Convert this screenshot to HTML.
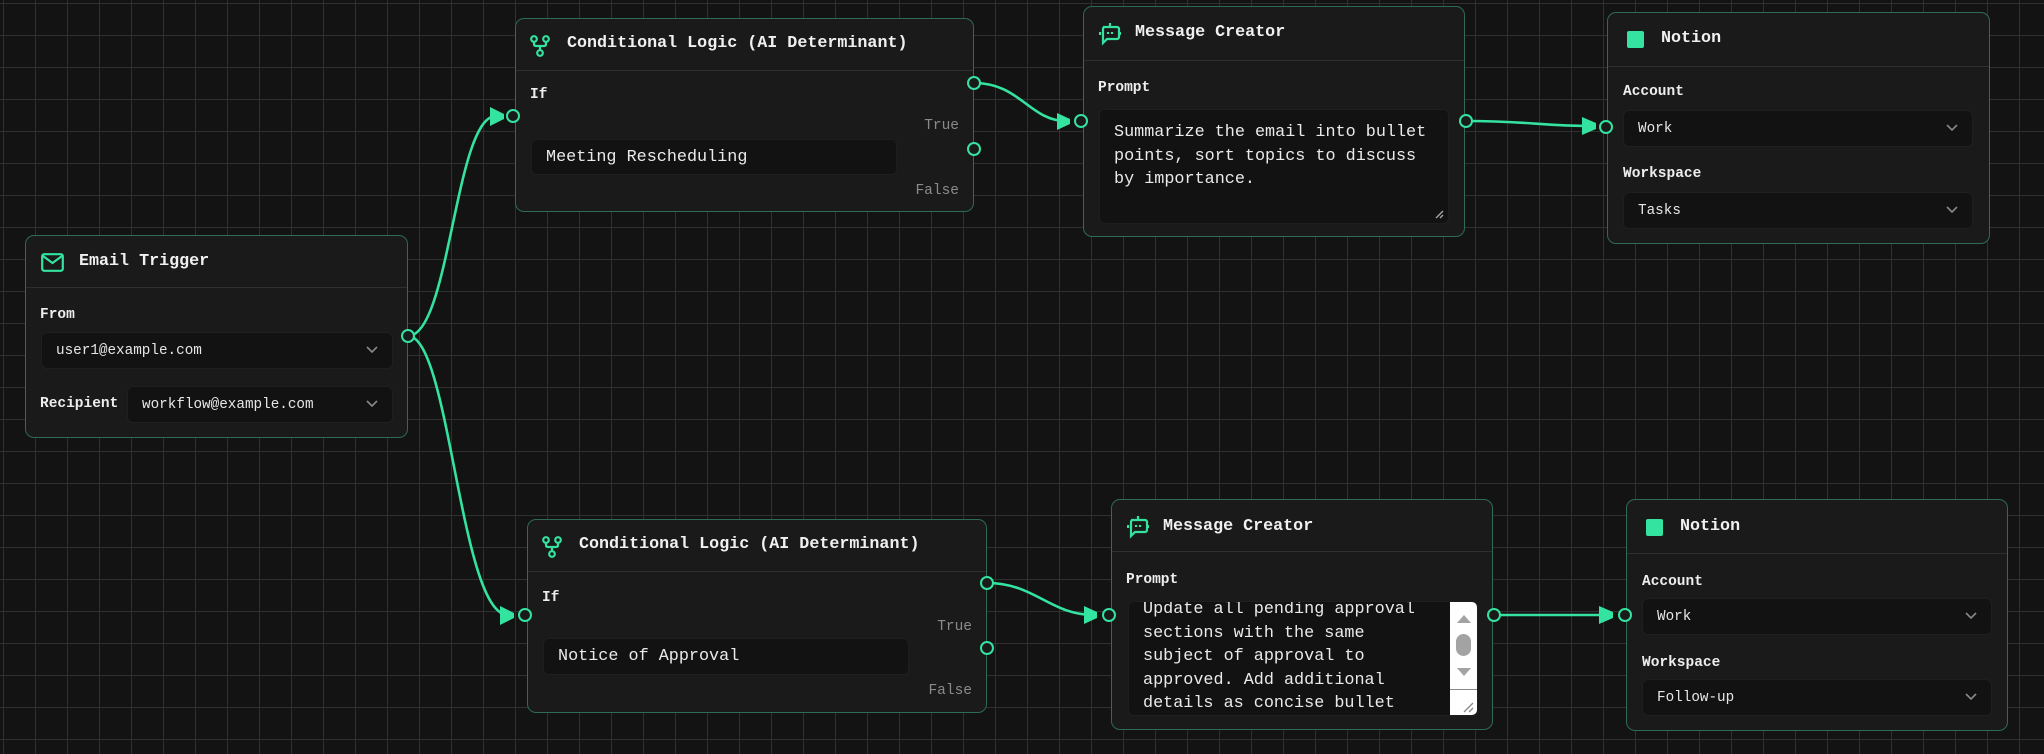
<!DOCTYPE html>
<html><head><meta charset="utf-8"><style>
*{box-sizing:border-box;margin:0;padding:0}
body{width:2044px;height:754px;overflow:hidden;background:#131313;font-family:"Liberation Mono",monospace;color:#e8e8e8;position:relative;
background-image:linear-gradient(#303030 1px,transparent 1px),linear-gradient(90deg,#303030 1px,transparent 1px);background-size:32px 32px;background-position:3px 3px}
.n{position:absolute;background:#1a1a1a;border:1.5px solid #2d6b52;border-radius:9px}
.hd{position:absolute;left:0;right:0;top:0;border-bottom:1.5px solid #2f2f2f}
.t{position:absolute;font-weight:bold;font-size:16.7px;color:#f0f0f0;white-space:nowrap}
.ic{position:absolute}
.lb{position:absolute;font-weight:bold;font-size:14.5px;color:#eee;white-space:nowrap}
.sel{position:absolute;background:#121212;border:1px solid #1f1f1f;border-radius:6px;font-size:14.3px;color:#e6e6e6;padding-left:14px;display:flex;align-items:center}
.sel svg{position:absolute;right:14px;top:50%;margin-top:-5px}
.inp{position:absolute;background:#121212;border:1px solid #1e1e1e;border-radius:6px;font-size:16.8px;color:#eaeaea;padding-left:14px;display:flex;align-items:center}
.ta{position:absolute;background:#121212;border:1px solid #1e1e1e;border-radius:6px;font-size:16.8px;line-height:23.5px;color:#eaeaea;overflow:hidden}
.gr{position:absolute;font-size:14.5px;color:#8a8a8a;text-align:right}
.h{position:absolute;width:14px;height:14px;border:2px solid #34e3a0;border-radius:50%;background:#1a1a1a;margin:-7px 0 0 -7px}
</style></head><body>
<svg width="2044" height="754" style="position:absolute;left:0;top:0" fill="none" stroke="#34e3a0" stroke-width="2.6">
<path d="M408 336 C450 336 455 116 496 116"/>
<path d="M408 336 C450 336 460 615 508 615"/>
<path d="M974 83 C1020 83 1030 121 1066 121"/>
<path d="M1466 121 C1530 121 1540 126 1592 126"/>
<path d="M987 583 C1035 583 1050 615 1094 615"/>
<path d="M1494 615 L1610 615"/>
<g fill="#34e3a0" stroke="none">
<polygon points="490,107 504,114 504,119 490,126"/>
<polygon points="500,606 514,613 514,618 500,625"/>
<polygon points="1057,113 1070,119 1070,124 1057,130"/>
<polygon points="1582,117 1596,123 1596,129 1582,135"/>
<polygon points="1084,606 1097,612 1097,618 1084,624"/>
<polygon points="1599,606 1613,612 1613,618 1599,624"/>
</g></svg>

<!-- Email Trigger -->
<div class="n" style="left:25px;top:235px;width:383px;height:203px">
<div class="hd" style="height:52px"></div>
<svg class="ic" style="left:15px;top:17px" width="23" height="19" viewBox="0 0 23 19" fill="none" stroke="#34e3a0" stroke-width="2.2"><rect x="1.2" y="1.2" width="20.6" height="16.6" rx="2"/><path d="M2 3l9.5 7 9.5-7"/></svg>
<div class="t" style="left:53px;top:16px">Email Trigger</div>
<div class="lb" style="left:14px;top:71px">From</div>
<div class="sel" style="left:15px;top:96px;width:352px;height:37px">user1@example.com<svg width="12" height="8" viewBox="0 0 12 8" fill="none" stroke="#888" stroke-width="1.6"><path d="M1 1l5 5 5-5"/></svg></div>
<div class="lb" style="left:14px;top:160px">Recipient</div>
<div class="sel" style="left:101px;top:150px;width:266px;height:37px">workflow@example.com<svg width="12" height="8" viewBox="0 0 12 8" fill="none" stroke="#888" stroke-width="1.6"><path d="M1 1l5 5 5-5"/></svg></div>
</div>

<!-- Cond 1 -->
<div class="n" style="left:515px;top:18px;width:459px;height:194px">
<div class="hd" style="height:52px"></div>
<svg class="ic" style="left:14px;top:16px" width="20" height="22" viewBox="0 0 20 22" fill="none" stroke="#34e3a0" stroke-width="2.2"><circle cx="4" cy="4" r="2.8"/><circle cx="16" cy="4" r="2.8"/><circle cx="10" cy="18" r="2.8"/><path d="M4 7v2q0 2 2 2h8q2 0 2-2V7M10 11v4"/></svg>
<div class="t" style="left:51px;top:15px">Conditional Logic (AI Determinant)</div>
<div class="lb" style="left:14px;top:68px">If</div>
<div class="gr" style="right:14px;top:99px">True</div>
<div class="inp" style="left:15px;top:120px;width:366px;height:36px">Meeting Rescheduling</div>
<div class="gr" style="right:14px;top:164px">False</div>
</div>

<!-- Cond 2 -->
<div class="n" style="left:527px;top:519px;width:460px;height:194px">
<div class="hd" style="height:52px"></div>
<svg class="ic" style="left:14px;top:16px" width="20" height="22" viewBox="0 0 20 22" fill="none" stroke="#34e3a0" stroke-width="2.2"><circle cx="4" cy="4" r="2.8"/><circle cx="16" cy="4" r="2.8"/><circle cx="10" cy="18" r="2.8"/><path d="M4 7v2q0 2 2 2h8q2 0 2-2V7M10 11v4"/></svg>
<div class="t" style="left:51px;top:15px">Conditional Logic (AI Determinant)</div>
<div class="lb" style="left:14px;top:70px">If</div>
<div class="gr" style="right:14px;top:99px">True</div>
<div class="inp" style="left:15px;top:118px;width:366px;height:37px">Notice of Approval</div>
<div class="gr" style="right:14px;top:163px">False</div>
</div>

<!-- MC1 -->
<div class="n" style="left:1083px;top:6px;width:382px;height:231px">
<div class="hd" style="height:54px"></div>
<svg class="ic" style="left:15px;top:15px" width="22" height="24" viewBox="0 0 22 24" fill="none" stroke="#34e3a0" stroke-width="2.2"><path d="M11 1v4M4 5h14a2 2 0 0 1 2 2v8a2 2 0 0 1-2 2H8l-4 4V7a2 2 0 0 1 2-2z"/><path d="M1 10v3M21 10v3M9 10v2M13 10v2"/></svg>
<div class="t" style="left:51px;top:16px">Message Creator</div>
<div class="lb" style="left:14px;top:73px">Prompt</div>
<div class="ta" style="left:15px;top:102px;width:350px;height:115px;padding:11px 0 0 14px">Summarize the email into bullet<br>points, sort topics to discuss<br>by importance.
<svg style="position:absolute;right:4px;bottom:4px" width="10" height="10" fill="none" stroke="#aaa" stroke-width="1.3"><path d="M9 2L2 9M9 6L6 9"/></svg></div>
</div>

<!-- MC2 -->
<div class="n" style="left:1111px;top:499px;width:382px;height:231px">
<div class="hd" style="height:52px"></div>
<svg class="ic" style="left:15px;top:15px" width="22" height="24" viewBox="0 0 22 24" fill="none" stroke="#34e3a0" stroke-width="2.2"><path d="M11 1v4M4 5h14a2 2 0 0 1 2 2v8a2 2 0 0 1-2 2H8l-4 4V7a2 2 0 0 1 2-2z"/><path d="M1 10v3M21 10v3M9 10v2M13 10v2"/></svg>
<div class="t" style="left:51px;top:17px">Message Creator</div>
<div class="lb" style="left:14px;top:72px">Prompt</div>
<div class="ta" style="left:16px;top:101px;width:350px;height:115px">
<div style="position:absolute;left:14px;top:-4px;width:290px">Update all pending approval sections with the same subject of approval to approved. Add additional details as concise bullet</div>
<div style="position:absolute;right:0;top:0;width:27px;height:114px;background:#fff">
<svg style="position:absolute;left:7px;top:12px" width="14" height="9"><polygon points="0,9 7,1 14,9" fill="#a3a3a3"/></svg>
<div style="position:absolute;left:6px;top:32px;width:15px;height:22px;border-radius:8px;background:#a3a3a3"></div>
<svg style="position:absolute;left:7px;top:66px" width="14" height="9"><polygon points="0,0 7,8 14,0" fill="#a3a3a3"/></svg>
<div style="position:absolute;left:0;top:87px;width:27px;border-top:1px solid #888"></div>
<svg style="position:absolute;right:3px;bottom:3px" width="12" height="12" fill="none" stroke="#888" stroke-width="1.3"><path d="M11 2L2 11M11 7L7 11"/></svg>
</div></div>
</div>

<!-- Notion 1 -->
<div class="n" style="left:1607px;top:12px;width:383px;height:232px">
<div class="hd" style="height:54px"></div>
<div class="ic" style="left:19px;top:18px;width:17px;height:17px;background:#34e3a0;border-radius:2px"></div>
<div class="t" style="left:53px;top:16px">Notion</div>
<div class="lb" style="left:15px;top:71px">Account</div>
<div class="sel" style="left:15px;top:97px;width:350px;height:37px">Work<svg width="12" height="8" viewBox="0 0 12 8" fill="none" stroke="#888" stroke-width="1.6"><path d="M1 1l5 5 5-5"/></svg></div>
<div class="lb" style="left:15px;top:153px">Workspace</div>
<div class="sel" style="left:15px;top:179px;width:350px;height:37px">Tasks<svg width="12" height="8" viewBox="0 0 12 8" fill="none" stroke="#888" stroke-width="1.6"><path d="M1 1l5 5 5-5"/></svg></div>
</div>

<!-- Notion 2 -->
<div class="n" style="left:1626px;top:499px;width:382px;height:232px">
<div class="hd" style="height:54px"></div>
<div class="ic" style="left:19px;top:19px;width:17px;height:17px;background:#34e3a0;border-radius:2px"></div>
<div class="t" style="left:53px;top:17px">Notion</div>
<div class="lb" style="left:15px;top:74px">Account</div>
<div class="sel" style="left:15px;top:98px;width:350px;height:37px">Work<svg width="12" height="8" viewBox="0 0 12 8" fill="none" stroke="#888" stroke-width="1.6"><path d="M1 1l5 5 5-5"/></svg></div>
<div class="lb" style="left:15px;top:155px">Workspace</div>
<div class="sel" style="left:15px;top:179px;width:350px;height:37px">Follow-up<svg width="12" height="8" viewBox="0 0 12 8" fill="none" stroke="#888" stroke-width="1.6"><path d="M1 1l5 5 5-5"/></svg></div>
</div>

<!-- handles -->
<div class="h" style="left:408px;top:336px"></div>
<div class="h" style="left:513px;top:116px"></div>
<div class="h" style="left:974px;top:83px"></div>
<div class="h" style="left:974px;top:149px"></div>
<div class="h" style="left:1081px;top:121px"></div>
<div class="h" style="left:1466px;top:121px"></div>
<div class="h" style="left:1606px;top:127px"></div>
<div class="h" style="left:525px;top:615px"></div>
<div class="h" style="left:987px;top:583px"></div>
<div class="h" style="left:987px;top:648px"></div>
<div class="h" style="left:1109px;top:615px"></div>
<div class="h" style="left:1494px;top:615px"></div>
<div class="h" style="left:1625px;top:615px"></div>
</body></html>
